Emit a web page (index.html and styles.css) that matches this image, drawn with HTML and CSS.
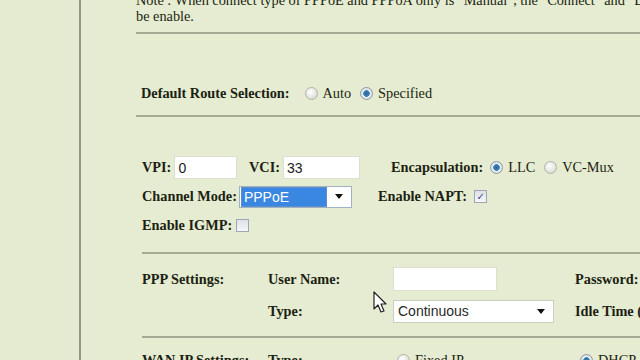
FILE: index.html
```html
<!DOCTYPE html>
<html lang="en">
<head>
  <meta charset="UTF-8" />
  <title>WAN Configuration</title>
  <link rel="stylesheet" href="styles.css">
</head>
<body>
  <div class="page">
    <div class="sidebar"></div>
    <div class="main">

      <div class="section note">
        <p>Note : When connect type of PPPoE and PPPoA only is "Manual", the "Connect" and "Disconnect" button will<br>be enable.</p>
      </div>

      <div class="section route">
        <div class="row">
          <span class="label">Default Route Selection:</span>
          <label class="opt gap-l"><input type="radio" name="route"> Auto</label>
          <label class="opt"><input type="radio" name="route" checked> Specified</label>
        </div>
      </div>

      <div class="section channel">
        <div class="row">
          <div class="cell vpi">
            <span class="label">VPI:</span>
            <input class="text w-vpi" type="text" value="0">
          </div>
          <div class="cell vci">
            <span class="label">VCI:</span>
            <input class="text w-vci" type="text" value="33">
          </div>
          <div class="cell">
            <span class="label">Encapsulation:</span>
            <label class="opt gap-s"><input type="radio" name="encap" checked> LLC</label>
            <label class="opt"><input type="radio" name="encap"> VC-Mux</label>
          </div>
        </div>
        <div class="row">
          <div class="cell mode">
            <span class="label">Channel Mode:</span>
            <div class="select w-mode focused">
              <span class="value">PPPoE</span>
              <span class="arrow"></span>
            </div>
          </div>
          <div class="cell">
            <span class="label">Enable NAPT:</span>
            <label class="box gap-s"><input type="checkbox" checked></label>
          </div>
        </div>
        <div class="row">
          <div class="cell">
            <span class="label">Enable IGMP:</span>
            <label class="box gap-t"><input type="checkbox"></label>
          </div>
        </div>
      </div>

      <div class="section ppp">
        <div class="grid">
          <span class="label">PPP Settings:</span>
          <span class="label">User Name:</span>
          <input class="text w-user" type="text" value="">
          <span class="label">Password:</span>

          <span></span>
          <span class="label">Type:</span>
          <div class="select w-type">
            <span class="value">Continuous</span>
            <span class="arrow"></span>
          </div>
          <span class="label">Idle Time (min):</span>
        </div>
        <svg class="cursor" width="16" height="24" viewBox="0 0 16 24">
          <path d="M1 1 L1 18 L5 14 L8 21 L11 20 L8 13 L13 13 Z" fill="#fff" stroke="#222" stroke-width="1.2" stroke-linejoin="round"/>
        </svg>
      </div>

      <div class="section wan">
        <div class="grid">
          <span class="label">WAN IP Settings:</span>
          <span class="label">Type:</span>
          <label class="opt"><input type="radio" name="wan"> Fixed IP</label>
          <label class="opt"><input type="radio" name="wan" checked> DHCP</label>
        </div>
      </div>

    </div>
  </div>
</body>
</html>
```

FILE: styles.css
```css
html, body {
  margin: 0;
  height: 100%;
  overflow: hidden;
}

body {
  background: #e5ecd1;
  color: #1c1f12;
  font-family: "Liberation Serif", "Times New Roman", serif;
  font-size: 14.3px;
}

.page {
  display: flex;
  height: 100%;
}

.sidebar {
  width: 79px;
  flex: none;
  background: #e4ebd0;
  border-right: 2px solid #8f9983;
}

.main {
  flex: 1;
  padding-left: 55px;
  min-width: 0;
}

.section {
  border-bottom: 2px solid #a2ac93;
}

.note p {
  margin: -8px 0 0;
  padding-bottom: 8px;
  line-height: 16px;
  white-space: nowrap;
}

.route {
  padding: 48px 0 11px 5px;
}

.channel {
  margin-left: 6px;
  padding: 36px 0 12px 0;
}

.ppp {
  position: relative;
  margin-left: 6px;
  padding: 9px 0 9px 0;
}

.wan {
  margin-left: 6px;
  border-bottom: none;
  padding-top: 10px;
}

.row {
  display: flex;
  align-items: center;
  height: 29px;
  white-space: nowrap;
}

.route .row {
  height: 22px;
}

.cell {
  display: flex;
  align-items: center;
}

.vpi { width: 107px; }
.vci { width: 142px; }
.mode { width: 236px; }

.label {
  font-weight: bold;
  white-space: nowrap;
}

.opt {
  display: flex;
  align-items: center;
  gap: 5px;
  margin-right: 9px;
}

.gap-l { margin-left: 15px; }
.gap-s { margin-left: 7px; }
.gap-t { margin-left: 4px; }

input[type="radio"] {
  appearance: none;
  margin: 0;
  width: 13px;
  height: 13px;
  border-radius: 50%;
  border: 1px solid #b0b4aa;
  background: radial-gradient(circle at 40% 35%, #ffffff, #cfd2c9);
}

input[type="radio"]:checked {
  border-color: #8e9aa6;
  background: radial-gradient(circle, #2a6894 0, #3c84b6 3px, #e9eef2 3.6px, #c9d0d6 100%);
}

input[type="checkbox"] {
  appearance: none;
  margin: 0;
  width: 13px;
  height: 13px;
  border: 1px solid #9ea8b5;
  background: linear-gradient(#dde1e6, #f6f7f8);
  display: grid;
  place-items: center;
}

input[type="checkbox"]:checked::after {
  content: "\2713";
  font-family: "DejaVu Sans", sans-serif;
  font-size: 10px;
  line-height: 1;
  color: #3f3f96;
}

.box {
  display: flex;
}

.text {
  box-sizing: border-box;
  height: 23px;
  margin: 0 0 0 3px;
  padding: 0 3px;
  border: 1px solid #dadfd0;
  background: #ffffff;
  font-family: "Liberation Sans", Arial, sans-serif;
  font-size: 14px;
  color: #222;
  outline: none;
}

.w-vpi { width: 63px; }
.w-vci { width: 77px; }
.w-user { width: 104px; height: 24px; margin-left: 0; }

.select {
  box-sizing: border-box;
  display: flex;
  align-items: center;
  height: 22px;
  margin-left: 2px;
  padding: 2px;
  background: #ffffff;
  border: 1px solid #c8cfc0;
  font-family: "Liberation Sans", Arial, sans-serif;
  font-size: 14px;
  color: #2a2a2a;
}

.w-mode { width: 113px; }
.w-type { width: 161px; height: 23px; margin-left: 0; }

.select .value {
  flex: 1;
  padding-left: 2px;
  line-height: 18px;
}

.focused {
  border-color: #9fb1c4;
}

.focused .value {
  background: #3a87e2;
  color: #ffffff;
  outline: 1px solid #5f8fc8;
  margin-right: 3px;
}

.arrow {
  width: 0;
  height: 0;
  margin: 0 6px 0 6px;
  border-left: 4px solid transparent;
  border-right: 4px solid transparent;
  border-top: 5px solid #111;
}

.grid {
  display: grid;
  grid-template-columns: 126px 125px 182px auto;
  grid-auto-rows: 32px;
  align-items: center;
  white-space: nowrap;
}

.wan .grid {
  grid-template-columns: 126px 129px 183px auto;
  grid-auto-rows: 24px;
}

.cursor {
  position: absolute;
  left: 231px;
  top: 37px;
}
```
